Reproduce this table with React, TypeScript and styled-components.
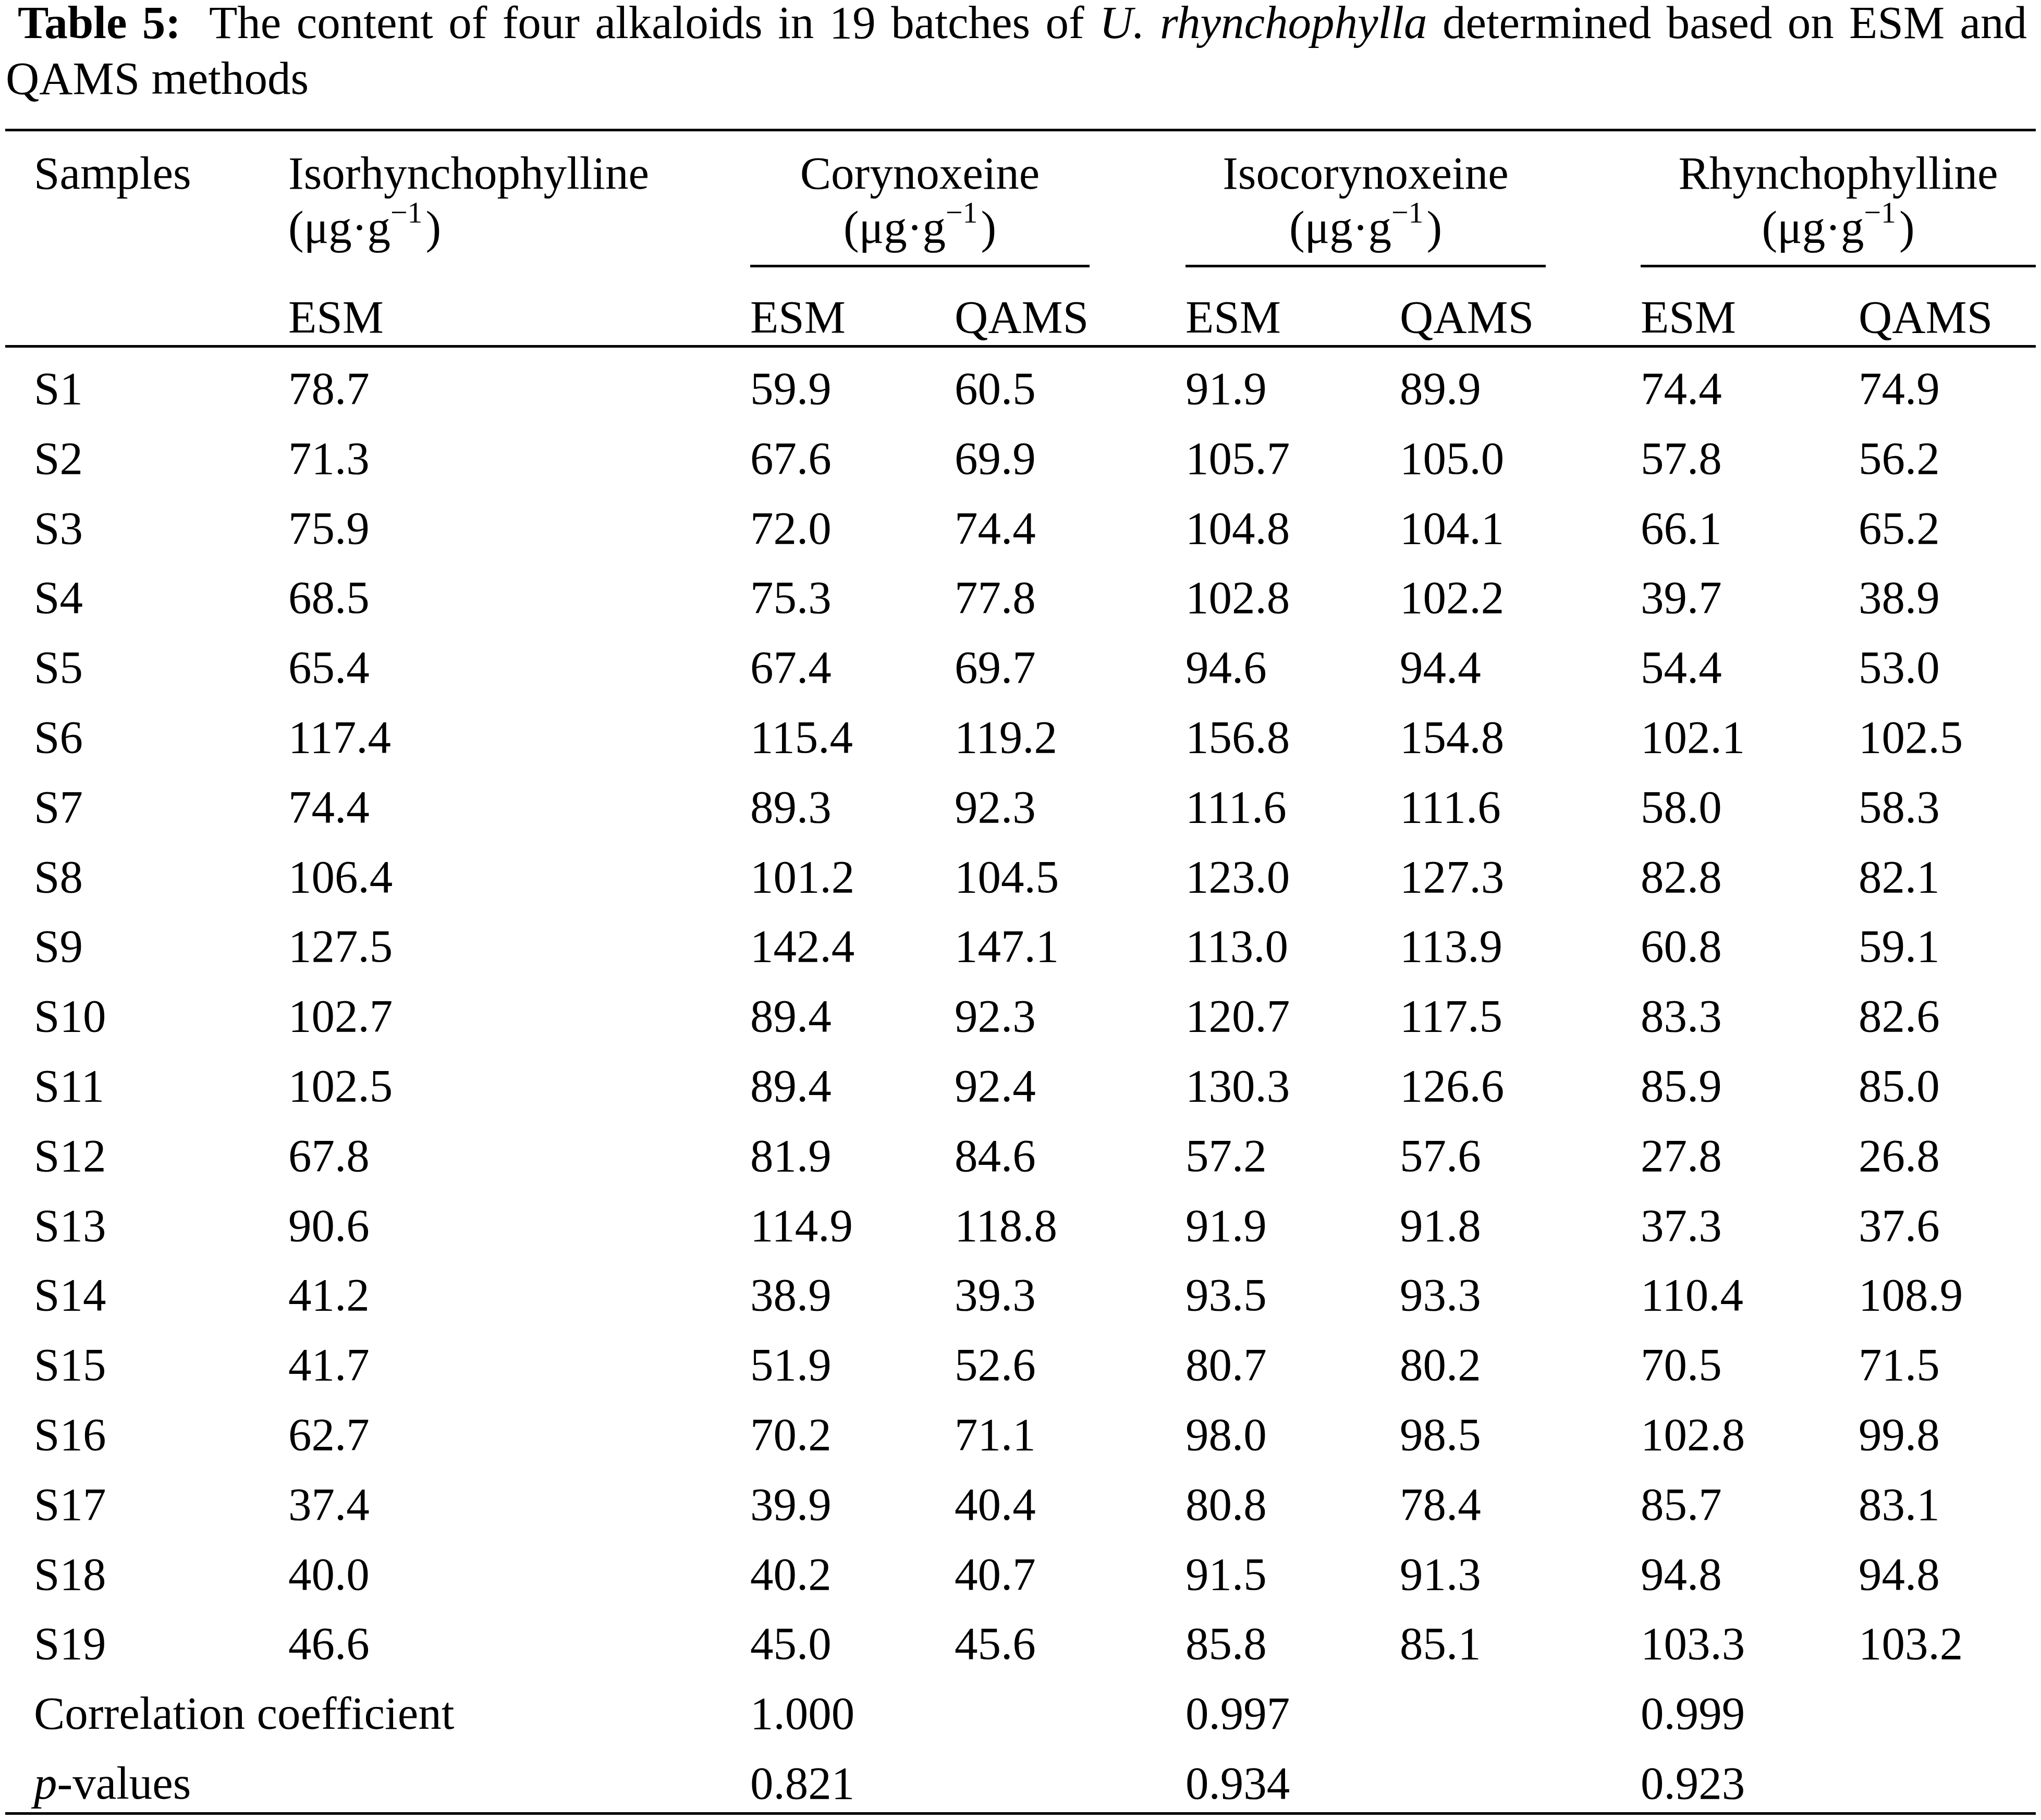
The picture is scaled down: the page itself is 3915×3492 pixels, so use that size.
import React from "react";
import styled, { createGlobalStyle, css } from "styled-components";

const Global = createGlobalStyle`
  html, body {
    margin: 0;
    padding: 0;
    background: #ffffff;
  }
  body {
    color: #000000;
    font-family: "Liberation Serif", "Times New Roman", serif;
    font-size: 89px;
  }
`;

const columns = css`
  display: grid;
  grid-template-columns: 543px 886px 392px 443px 411px 462px 418px 340px;
`;

const Page = styled.div`
  width: 3915px;
  padding-bottom: 10px;
`;

const Caption = styled.p`
  margin: -10px 0 43px 0;
  padding: 0 27px 0 11px;
  line-height: 107px;
  text-align: justify;
  text-indent: 23px;
`;

const Label = styled.b`
  font-weight: 700;
  margin-right: 54px;
`;

const Run = styled.span``;

const Table = styled.div`
  margin-left: 10px;
  width: 3895px;
  border-top: 5px solid #000;
  border-bottom: 5px solid #000;
`;

const Head = styled.div`
  border-bottom: 5px solid #000;
  line-height: 104px;
`;

const HeadTop = styled.div`
  ${columns};
  padding-top: 28px;
  align-items: start;
`;

const HeadSub = styled.div`
  ${columns};
  padding-top: 43px;
  padding-bottom: 2px;
`;

const Cell = styled.div<{ $first?: boolean; $span?: number }>`
  white-space: nowrap;
  padding-left: ${(p) => (p.$first ? "55px" : "0")};
  grid-column: ${(p) => (p.$span ? `span ${p.$span}` : "auto")};
`;

const GroupHead = styled.div<{ $trim: number }>`
  grid-column: span 2;
  margin-right: ${(p) => p.$trim}px;
  padding-bottom: 20px;
  border-bottom: 5px solid #000;
  text-align: center;
  white-space: nowrap;
`;

const Sup = styled.sup`
  font-size: 0.65em;
  line-height: 0;
  vertical-align: 0.67em;
  margin-right: 6px;
`;

const Body = styled.div`
  display: flex;
  flex-direction: column;
  gap: 21.8px;
  padding-top: 22px;
`;

const Row = styled.div`
  ${columns};
  line-height: 112px;
`;

const Unit = () => (
  <>
    (μg·g<Sup>−1</Sup>)
  </>
);

const groups = [
  { name: "Corynoxeine", trim: 184 },
  { name: "Isocorynoxeine", trim: 182 },
  { name: "Rhynchophylline", trim: 0 },
];

const data: string[][] = [
  ["S1", "78.7", "59.9", "60.5", "91.9", "89.9", "74.4", "74.9"],
  ["S2", "71.3", "67.6", "69.9", "105.7", "105.0", "57.8", "56.2"],
  ["S3", "75.9", "72.0", "74.4", "104.8", "104.1", "66.1", "65.2"],
  ["S4", "68.5", "75.3", "77.8", "102.8", "102.2", "39.7", "38.9"],
  ["S5", "65.4", "67.4", "69.7", "94.6", "94.4", "54.4", "53.0"],
  ["S6", "117.4", "115.4", "119.2", "156.8", "154.8", "102.1", "102.5"],
  ["S7", "74.4", "89.3", "92.3", "111.6", "111.6", "58.0", "58.3"],
  ["S8", "106.4", "101.2", "104.5", "123.0", "127.3", "82.8", "82.1"],
  ["S9", "127.5", "142.4", "147.1", "113.0", "113.9", "60.8", "59.1"],
  ["S10", "102.7", "89.4", "92.3", "120.7", "117.5", "83.3", "82.6"],
  ["S11", "102.5", "89.4", "92.4", "130.3", "126.6", "85.9", "85.0"],
  ["S12", "67.8", "81.9", "84.6", "57.2", "57.6", "27.8", "26.8"],
  ["S13", "90.6", "114.9", "118.8", "91.9", "91.8", "37.3", "37.6"],
  ["S14", "41.2", "38.9", "39.3", "93.5", "93.3", "110.4", "108.9"],
  ["S15", "41.7", "51.9", "52.6", "80.7", "80.2", "70.5", "71.5"],
  ["S16", "62.7", "70.2", "71.1", "98.0", "98.5", "102.8", "99.8"],
  ["S17", "37.4", "39.9", "40.4", "80.8", "78.4", "85.7", "83.1"],
  ["S18", "40.0", "40.2", "40.7", "91.5", "91.3", "94.8", "94.8"],
  ["S19", "46.6", "45.0", "45.6", "85.8", "85.1", "103.3", "103.2"],
];

const summary: { label: React.ReactNode; values: string[] }[] = [
  { label: "Correlation coefficient", values: ["1.000", "0.997", "0.999"] },
  {
    label: (
      <>
        <i>p</i>-values
      </>
    ),
    values: ["0.821", "0.934", "0.923"],
  },
];

export default function App() {
  return (
    <Page>
      <Global />
      <Caption>
        <Label>Table 5:</Label>
        <Run>The content of four alkaloids in 19 batches of</Run>{" "}
        <i>U. rhynchophylla</i> <Run>determined based on ESM and</Run>{" "}
        <Run>QAMS methods</Run>
      </Caption>
      <Table>
        <Head>
          <HeadTop>
            <Cell $first>Samples</Cell>
            <Cell>
              Isorhynchophylline
              <br />
              <Unit />
            </Cell>
            {groups.map((g) => (
              <GroupHead key={g.name} $trim={g.trim}>
                {g.name}
                <br />
                <Unit />
              </GroupHead>
            ))}
          </HeadTop>
          <HeadSub>
            <Cell $first />
            <Cell>ESM</Cell>
            <Cell>ESM</Cell>
            <Cell>QAMS</Cell>
            <Cell>ESM</Cell>
            <Cell>QAMS</Cell>
            <Cell>ESM</Cell>
            <Cell>QAMS</Cell>
          </HeadSub>
        </Head>
        <Body>
          {data.map((r) => (
            <Row key={r[0]}>
              {r.map((v, i) => (
                <Cell key={i} $first={i === 0}>
                  {v}
                </Cell>
              ))}
            </Row>
          ))}
          {summary.map((s, k) => (
            <Row key={k}>
              <Cell $first $span={2}>
                {s.label}
              </Cell>
              <Cell $span={2}>{s.values[0]}</Cell>
              <Cell $span={2}>{s.values[1]}</Cell>
              <Cell $span={2}>{s.values[2]}</Cell>
            </Row>
          ))}
        </Body>
      </Table>
    </Page>
  );
}
